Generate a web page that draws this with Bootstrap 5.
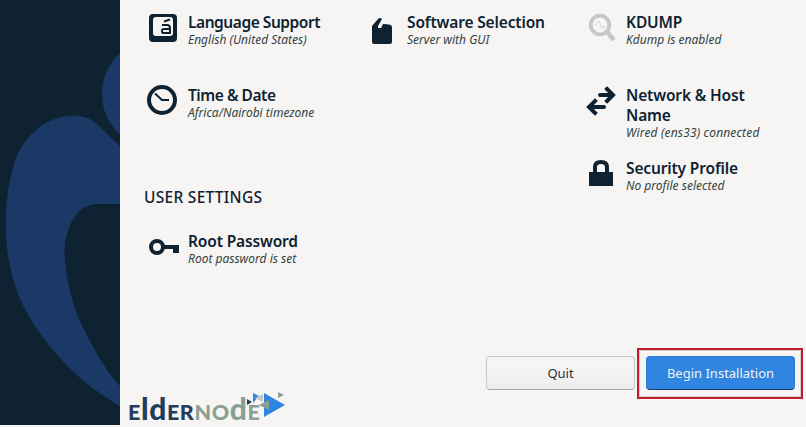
<!DOCTYPE html>
<html lang="en">
<head>
<meta charset="utf-8">
<meta name="viewport" content="width=device-width, initial-scale=1">
<title>Installation Summary</title>
<link rel="stylesheet" href="https://cdn.jsdelivr.net/npm/bootstrap@5.3.0/dist/css/bootstrap.min.css">
<style>
body{width:806px;height:427px;background:#f6f5f4;color:#0f2231;font-family:"Noto Sans",sans-serif;overflow:hidden}
.side{width:120px;height:425px;background:#0f2231}
.hub{width:686px;height:427px;padding:12px 0 0 24px}
.spokes{height:172px}
.hub-col{width:219px}
.spoke{height:73px}
.glyph{width:44px;height:40px;flex:none}
.glyph svg,.side svg,.brand svg{display:block;overflow:visible}
.ttl{font-size:15.5px;font-weight:600;line-height:20px;white-space:nowrap;letter-spacing:-.15px}
.ttl.snug{letter-spacing:-.45px}
.sub{font-size:12px;font-style:italic;line-height:16px;color:#34423f;white-space:nowrap}
.sub.airy{letter-spacing:.16px}
.sec{font-size:15.5px;font-weight:500;line-height:26px;height:47px;letter-spacing:.28px}
.foot{height:79px}
.act{width:149px;height:34px;padding:0;font-size:13px;line-height:32px;border-radius:4px}
.quit{border:1px solid #c6c5c8;border-bottom-color:#aaa;background:linear-gradient(#f6f5f4 30%,#eeedec);color:#24323a;margin-right:2px}
.begin,.begin:hover{background:#3085e0;border:1px solid #2b7ad2;border-bottom-color:#153a72;color:#eef2f5}
.ring{border:2px solid #c21c2d;width:166px;height:51px;padding:6px 7px 0 7px;margin-right:3px;box-shadow:inset 0 0 0 1px #d4d0d2}
.brand{height:34px;width:170px;margin-left:-16px}
.word{font-family:"Lato",sans-serif;font-weight:900;line-height:34px;color:#253b5b;white-space:nowrap;width:120px;letter-spacing:.6px;padding-top:2px}
.cap{font-size:21.5px}.asc{font-size:30px}
.green{color:#8aa093}
</style>
</head>
<body>
<div class="d-flex">
<aside class="side flex-shrink-0">
<svg width="120" height="425" viewBox="0 0 120 425" fill="#1a3966"><path d="M120 53C108 64 102 79 102 93C102 111 109 125 120 134Z"/><path d="M120 146C112 139 104 131 98 125C90 117 80 115 68 116C45 118 25 136 16 158C9 180 5 202 6 230C7 283 26 318 53 350C73 374 94 391 120 406V386C103 368 90 342 78 317C69 293 63 264 65 244C68 224 77 205 97 204H120Z"/></svg>
</aside>
<main class="hub d-flex flex-column">
<div class="spokes d-flex flex-shrink-0">
<section class="hub-col">
<div class="spoke d-flex"><div class="glyph"><svg width="36" height="36"><rect x="5" y="2" width="28" height="28" rx="4" fill="#0f2231"/><rect x="9" y="5" width="20" height="19" rx="3" fill="#f6f5f4"/><path d="M18 13H23Q26 13 26 16V21H19Q18 21 18 19T20 17H26M20 9.5L26 7.5" fill="none" stroke="#0f2231" stroke-width="2"/></svg></div><div><div class="ttl snug">Language Support</div><div class="sub">English (United States)</div></div></div>
<div class="spoke d-flex"><div class="glyph"><svg width="36" height="36"><circle cx="18" cy="15" r="13" fill="none" stroke="#0f2231" stroke-width="4"/><path d="M11 8.5L18 15H25" fill="none" stroke="#0f2231" stroke-width="2"/></svg></div><div><div class="ttl snug">Time &amp; Date</div><div class="sub">Africa/Nairobi timezone</div></div></div>
</section>
<section class="hub-col">
<div class="spoke d-flex"><div class="glyph"><svg width="36" height="36" fill="#0f2231"><path d="M9 14L15 7Q17 5 19 7L15 14V16H18L20 12Q24 12 28 13L29 15V30Q29 32 27 32H11Q9 32 9 30Z"/></svg></div><div><div class="ttl">Software Selection</div><div class="sub">Server with GUI</div></div></div>
</section>
<section class="hub-col">
<div class="spoke d-flex"><div class="glyph"><svg width="36" height="36" fill="none" stroke="#c5c8c6"><circle cx="18" cy="13" r="9.3" stroke-width="3.8"/><path d="M25 20L32 28" stroke-width="4.5"/><path d="M12 14L17 9L20 16L24 14" stroke-width=".7"/></svg></div><div><div class="ttl">KDUMP</div><div class="sub">Kdump is enabled</div></div></div>
<div class="spoke d-flex"><div class="glyph"><svg width="36" height="36" fill="none" stroke="#0f2231" stroke-width="4" stroke-linecap="round"><path d="M18 10H29M22 22H9"/><path d="M25 4L31 10L25 16M13 16L7 22L13 28" stroke-linecap="square"/></svg></div><div><div class="ttl">Network &amp; Host<br>Name</div><div class="sub airy">Wired (ens33) connected</div></div></div>
<div class="spoke d-flex"><div class="glyph"><svg width="36" height="36"><path d="M7 14H31V28H7Z" fill="#0f2231"/><path d="M13 15V9Q13 4 19 4T25 9V15" fill="none" stroke="#0f2231" stroke-width="4"/></svg></div><div><div class="ttl">Security Profile</div><div class="sub">No profile selected</div></div></div>
</section>
</div>
<h2 class="sec m-0 flex-shrink-0">USER SETTINGS</h2>
<div class="spoke d-flex flex-shrink-0"><div class="glyph"><svg width="36" height="36"><circle cx="13" cy="16" r="6" fill="none" stroke="#0f2231" stroke-width="4"/><path d="M20 14H35V22H29V18H20Z" fill="#0f2231"/></svg></div><div><div class="ttl">Root Password</div><div class="sub">Root password is set</div></div></div>
<footer class="foot d-flex mt-auto flex-shrink-0 align-items-start">
<div class="brand d-flex align-self-end mb-1"><div class="word"><span class="cap">E</span><span class="asc">ld</span><span class="cap">ER</span><span class="green"><span class="cap">NO</span><span class="asc">d</span><span class="cap">E</span></span></div><svg width="36" height="34" class="position-relative"><path d="M16 4L37 16L16 28Z" fill="#3085e0"/><path d="M11 16L21 11V21Z" fill="#8aa093"/><path d="M5 4L11 7L5 14Z" fill="#3085e0"/><path d="M-1 10L4 13L-1 16Z" fill="#253b5b"/><path d="M15 5V13L7 9Z" fill="#c5c8c6"/><path d="M30 3L36 6L30 9Z" fill="#8aa093"/></svg></div>
<button class="btn act quit ms-auto mt-2">Quit</button>
<div class="ring"><button class="btn act begin">Begin Installation</button></div>
</footer>
</main>
</div>
<script src="https://cdn.jsdelivr.net/npm/bootstrap@5.3.0/dist/js/bootstrap.bundle.min.js"></script>
</body>
</html>
